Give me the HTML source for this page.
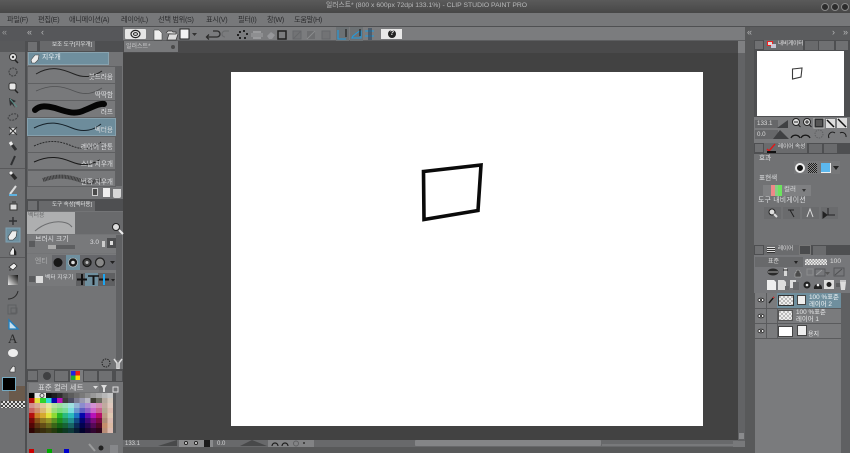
<!DOCTYPE html>
<html lang="ko"><head><meta charset="utf-8"><style>
html,body{margin:0;padding:0;background:#58595a}
#p{position:relative;width:850px;height:453px;overflow:hidden;background:#58595a;font-family:"Liberation Sans","Noto Sans CJK KR",sans-serif;font-size:6.500px;color:#cfd0d1;line-height:1;filter:blur(.28px)}
#p div,#p svg{position:absolute}
.t{white-space:nowrap}
.m{top:16px;color:#2c2d2f;font-size:7.200px;letter-spacing:-.3px}
.r{background:#78797b;border:1px solid #5f6062;box-sizing:border-box}
.l{color:#dcdddf}
.rr{right:737px;color:#dcdddf;font-size:6.600px}
.pr{display:block;height:5px;position:absolute;left:0;width:84px}
</style></head><body><div id="p">

<!-- title bar -->
<div style="left:0;top:0;width:850px;height:13px;background:linear-gradient(#5a5a5a,#474747)"></div>
<div class="t" style="left:326px;top:3px;font-size:6.800px;color:#b8b9ba">일러스트* (800 x 600px 72dpi 133.1%)  - CLIP STUDIO PAINT PRO</div>
<div style="left:821px;top:3px;width:8px;height:8px;border-radius:4px;background:#2c2c2c;border:1px solid #888;box-sizing:border-box"></div>
<div style="left:831px;top:3px;width:8px;height:8px;border-radius:4px;background:#2c2c2c;border:1px solid #888;box-sizing:border-box"></div>
<div style="left:841px;top:3px;width:8px;height:8px;border-radius:4px;background:#2c2c2c;border:1px solid #888;box-sizing:border-box"></div>

<!-- menu -->
<div style="left:0;top:13px;width:850px;height:13px;background:#77787a;border-bottom:1px solid #4f5052"></div>
<div class="t m" style="left:7px">파일(F)</div>
<div class="t m" style="left:38px">편집(E)</div>
<div class="t m" style="left:69px">애니메이션(A)</div>
<div class="t m" style="left:121px">레이어(L)</div>
<div class="t m" style="left:158px">선택 범위(S)</div>
<div class="t m" style="left:206px">표시(V)</div>
<div class="t m" style="left:238px">필터(I)</div>
<div class="t m" style="left:267px">창(W)</div>
<div class="t m" style="left:294px">도움말(H)</div>

<!-- left top strip -->
<div style="left:0;top:27px;width:123px;height:14px;background:#56575a"></div>
<div class="t" style="left:2px;top:28px;color:#9a9b9c;font-size:9px">«</div>
<div class="t" style="left:27px;top:28px;color:#b5b6b7;font-size:9px">«</div>
<div class="t" style="left:41px;top:28px;color:#b5b6b7;font-size:9px">‹</div>

<!-- toolbar -->
<div style="left:123px;top:27px;width:622px;height:14px;background:#7b7c7e;border-bottom:1px solid #5d5e60;box-sizing:border-box"></div>
<div style="left:125px;top:29px;width:21px;height:10px;background:#e6e6e6;border-radius:1px"></div>
<svg style="left:130px;top:29px" width="11" height="10" viewBox="0 0 11 10"><ellipse cx="5.500" cy="5" rx="4.500" ry="3.600" fill="none" stroke="#222" stroke-width="1.200"/><ellipse cx="5.500" cy="5" rx="2" ry="1.400" fill="none" stroke="#222"/></svg>
<svg style="left:152px;top:28px" width="60" height="13" viewBox="0 0 60 13">
<path d="M2 2h5l3 3v7H2z" fill="#eee" stroke="#333" stroke-width=".5"/>
<path d="M14 5l2-2h4l1 1h3v2h-7l-2 6h9l2-6" fill="#ddd" stroke="#333" stroke-width=".7"/>
<rect x="28" y="1" width="9" height="10" fill="#f2f2f2" stroke="#222"/>
<path d="M40 5h5l-2.500 3z" fill="#333"/></svg>
<svg style="left:204px;top:29px" width="30" height="11" viewBox="0 0 30 11"><path d="M9 2h4a3 3 0 010 6H3M5 5.500L2.500 8 5 10.500" fill="none" stroke="#2c2c2c" stroke-width="1.300"/><path d="M25 2h-4a3 3 0 000 6" fill="none" stroke="#6a6b6d" stroke-width="1.200"/></svg>
<svg style="left:235px;top:28px" width="56" height="13" viewBox="0 0 56 13">
<g fill="#222"><rect x="2" y="6" width="2" height="2"/><rect x="4" y="3" width="2" height="2"/><rect x="8" y="2" width="2" height="2"/><rect x="11" y="5" width="2" height="2"/><rect x="9" y="9" width="2" height="2"/><rect x="4" y="9" width="2" height="2"/></g>
<rect x="18" y="3" width="8" height="8" fill="#9a9b9d"/><rect x="16" y="5" width="12" height="4" fill="#8e8f91"/>
<path d="M32 8l4-4 4 3-3 4h-3z" fill="#96979a"/>
<path d="M43 3h8v8h-8z" fill="none" stroke="#1f1f1f" stroke-width="1.500"/></svg>
<svg style="left:292px;top:28px" width="40" height="13" viewBox="0 0 40 13">
<rect x="1" y="3" width="8" height="8" fill="#727375" stroke="#66676a"/><path d="M1 11l8-8" stroke="#66676a"/>
<rect x="15" y="3" width="8" height="8" fill="#6d6e70"/><path d="M15 11l8-8" stroke="#8b8c8e"/>
<rect x="30" y="3" width="8" height="8" fill="#727375" stroke="#66676a"/></svg>
<svg style="left:336px;top:27px" width="40" height="14" viewBox="0 0 40 14">
<rect x="0" width="13" height="14" fill="#6c7174"/>
<rect x="14" width="13" height="14" fill="#6c7174"/>
<path d="M2 3v9h8" fill="none" stroke="#1f9be0" stroke-width="1.100"/><path d="M10 2v8" stroke="#222" stroke-width="1.200"/>
<path d="M16 11h9V4c-3 0-5 3-8 5z" fill="none" stroke="#1f9be0" stroke-width="1.100"/><path d="M24 2v7" stroke="#222" stroke-width="1.200"/>
<path d="M29 4h9M29 9h9" stroke="#1f9be0" stroke-width="1"/><path d="M33 1v12M35 1v12" stroke="#1f3c58" stroke-width="1"/></svg>
<div style="left:381px;top:29px;width:21px;height:10px;background:#e8e8e8"></div>
<div style="left:388px;top:30px;width:8px;height:8px;border-radius:4px;background:#222;color:#eee;font-size:7px;line-height:8px;text-align:center;font-weight:bold">?</div>

<!-- tab bar -->
<div style="left:123px;top:41px;width:622px;height:12px;background:#4a4a4b"></div>
<div style="left:124px;top:41px;width:54px;height:11px;background:#78797b"></div>
<div class="t" style="left:126px;top:44px;font-size:6px;color:#c9cacb">일러스트*</div>
<div style="left:171px;top:45px;width:4px;height:4px;border-radius:2px;background:#4a4a4a"></div>

<!-- canvas -->
<div style="left:123px;top:53px;width:615px;height:387px;background:#424242"></div>
<div style="left:231px;top:72px;width:472px;height:354px;background:#fff"></div>
<svg style="left:415px;top:158px" width="75" height="68" viewBox="0 0 75 68"><path d="M8.500 13.500 L66 7 L63 52.500 L9 61.500 Z" fill="none" stroke="#0a0a0a" stroke-width="3.600" stroke-linejoin="miter"/></svg>
<div style="left:738px;top:41px;width:7px;height:12px;background:#7f8082"></div>
<div style="left:738px;top:53px;width:7px;height:394px;background:#626365"></div>
<div style="left:739px;top:433px;width:5px;height:6px;background:#8a8b8d"></div>

<!-- bottom status -->
<div style="left:123px;top:447px;width:622px;height:6px;background:#58595a"></div>
<div style="left:123px;top:440px;width:615px;height:7px;background:#68696b"></div>
<div class="t" style="left:125px;top:440.500px;font-size:6px;color:#d5d6d7">133.1</div>
<svg style="left:158px;top:440px" width="20" height="7"><path d="M0 6L19 0V6Z" fill="#48494a"/></svg>
<div style="left:179px;top:440px;width:34px;height:7px;background:#8a8b8d"></div>
<div style="left:184px;top:441px;width:4px;height:4px;border-radius:2px;background:#eee;border:1px solid #222;box-sizing:border-box"></div>
<div style="left:194px;top:441px;width:4px;height:4px;border-radius:2px;background:#eee;border:1px solid #222;box-sizing:border-box"></div>
<div style="left:204px;top:440px;width:6px;height:7px;background:#1b1b1b"></div>
<div class="t" style="left:217px;top:441px;font-size:6px;color:#d5d6d7">0.0</div>
<svg style="left:240px;top:440px" width="28" height="7"><path d="M0 6L12 0L27 6Z" fill="#48494a"/></svg>
<div style="left:268px;top:440px;width:46px;height:7px;background:#828385"></div>
<svg style="left:270px;top:440px" width="40" height="7"><path d="M2 6a3 3 0 016 0M12 6a3 3 0 016 0" stroke="#1d1d1d" fill="none" stroke-width="1.200"/><circle cx="26" cy="3.500" r="2.500" fill="none" stroke="#606163"/><rect x="33" y="2" width="2" height="2" fill="#444"/></svg>
<div style="left:415px;top:440px;width:186px;height:6px;background:#848587;border-radius:1px"></div>
<div style="left:602px;top:444px;width:132px;height:2px;background:#78797b"></div>
<div style="left:733px;top:441px;width:12px;height:6px;background:#78797b"></div>

<!-- left toolbox -->
<div style="left:0;top:41px;width:25px;height:412px;background:#6f7072"></div>
<div style="left:0;top:41px;width:25px;height:11px;background:#58595b"></div>
<div style="left:25px;top:41px;width:2px;height:412px;background:#4e4f51"></div>
<div style="left:0;top:168px;width:25px;height:1px;background:#59595b"></div>
<div style="left:0;top:257px;width:25px;height:1px;background:#59595b"></div>
<div style="left:0;top:376px;width:25px;height:1px;background:#59595b"></div>
<svg style="left:0;top:48px" width="25" height="330" viewBox="0 0 25 330">
<circle cx="13" cy="9" r="3.500" fill="#e5e5e5" stroke="#333"/><circle cx="13" cy="9" r="1.200" fill="#333"/><path d="M15 12l3 3" stroke="#222" stroke-width="1.500"/>
<circle cx="13" cy="24" r="4" fill="none" stroke="#3a3b3c" stroke-dasharray="2 1"/>
<rect x="9" y="35" width="7" height="7" rx="2" fill="#e8e8e8" stroke="#333"/><path d="M15 42l3 3" stroke="#222" stroke-width="1.500"/>
<path d="M9 50l7 3-3 2 2 5-3-4-2 2z" fill="#2f3032"/><path d="M10 51l7 8" stroke="#5a8e88"/>
<ellipse cx="13" cy="69" rx="5" ry="3" fill="none" stroke="#3f4042" stroke-dasharray="2 1" transform="rotate(-18 13 69)"/>
<circle cx="13" cy="83" r="3" fill="#e3e3e3"/><path d="M9 79l8 8M9 87l8-8" stroke="#333"/>
<path d="M10 94l6 8" stroke="#2f3032" stroke-width="3"/><path d="M10 94l2 3" stroke="#eee" stroke-width="3"/>
<path d="M15 108l-4 9" stroke="#2f3032" stroke-width="2"/>
<path d="M10 124l6 7" stroke="#2b2b2b" stroke-width="3.500"/><path d="M10 124l2 2" stroke="#eee" stroke-width="3"/>
<path d="M16 138l-6 8" stroke="#ddd" stroke-width="2"/><path d="M9 147h8" stroke="#5fb2e0" stroke-width="2"/>
<rect x="10" y="156" width="7" height="6" fill="#ddd" stroke="#333"/><path d="M12 154h4" stroke="#333"/>
<path d="M13 169v8M9 173h8" stroke="#2f3032" stroke-width="1.400"/>
<rect x="6" y="180" width="14" height="14" fill="#6d8f9f" stroke="#7fa1b1"/><path d="M8 189l4-6h5l-1 6-3 3H9z" fill="#eee" stroke="#333" stroke-width=".6"/>
<path d="M10 204l3-5 3 5v3h-6z" fill="#ececec" stroke="#222" stroke-width=".6"/><path d="M14 200l2 4v3h-2z" fill="#222"/>
<path d="M9 219l5-4 3 3-4 4zM9 222h2" fill="#eee" stroke="#222" stroke-width=".7"/>
<rect x="8" y="227" width="10" height="10" fill="url(#g)"/><defs><linearGradient id="g" x1="0" y1="1" x2="1" y2="0"><stop offset="0" stop-color="#eee"/><stop offset="1" stop-color="#111"/></linearGradient></defs>
<path d="M8 251c5 0 9-3 10-8" fill="none" stroke="#2c2c2c"/>
<rect x="8" y="257" width="8" height="9" fill="none" stroke="#5e5f61"/><rect x="11" y="260" width="6" height="5" fill="none" stroke="#5e5f61"/>
<path d="M9 272v9h9z" fill="#c8e0ee" stroke="#1f7fc0" stroke-width="1.300"/>
<ellipse cx="13" cy="305" rx="5" ry="4" fill="#eee"/>
<path d="M10 322l3-4 2 1v5h-5z" fill="#e8e8e8" stroke="#333" stroke-width=".6"/>
</svg>
<div class="t" style="left:8px;top:332px;font-family:'Liberation Serif',serif;font-size:13px;color:#2b2b2b">A</div>
<div style="left:0;top:376px;width:25px;height:77px;background:#6f7072"></div>
<div style="left:9px;top:386px;width:16px;height:15px;background:#6a5a4c"></div>
<div style="left:2px;top:377px;width:14px;height:14px;background:#000;border:1px solid #74a9c1;box-sizing:border-box"></div>
<div style="left:1px;top:401px;width:24px;height:7px;background:repeating-conic-gradient(#ddd 0 25%,#444 0 50%) 0 0/4px 4px"></div>

<!-- left panel: sub tool -->
<div style="left:27px;top:41px;width:96px;height:412px;background:#737476"></div>
<div style="left:27px;top:41px;width:96px;height:11px;background:#4e4f51"></div>
<div style="left:28px;top:42px;width:9px;height:9px;background:#6f7072"></div>
<div style="left:40px;top:41px;width:55px;height:10px;background:#68696b"></div>
<div class="t" style="left:52px;top:43px;font-size:5.500px;color:#dfe0e1">보조 도구[지우개]</div>
<div style="left:28px;top:52px;width:81px;height:13px;background:#6f8f9e;border:1px solid #88a3af;box-sizing:border-box"></div>
<svg style="left:29px;top:53px" width="12" height="11"><path d="M2 7l4-5h4l-1 5-3 3H3z" fill="#eee" stroke="#444" stroke-width=".6"/></svg>
<div class="t" style="left:42px;top:55px;font-size:6.800px;color:#e4ebef">지우개</div>
<div style="left:116px;top:66px;width:6px;height:120px;background:#5e5f61"></div>

<div class="r" style="left:27px;top:66px;width:89px;height:18px"></div>
<div class="r" style="left:27px;top:83px;width:89px;height:18px"></div>
<div class="r" style="left:27px;top:100px;width:89px;height:18px"></div>
<div style="left:27px;top:118px;width:89px;height:18px;background:#6d8c9b;border:1px solid #85a0ad;box-sizing:border-box"></div>
<div class="r" style="left:27px;top:136px;width:89px;height:17px"></div>
<div class="r" style="left:27px;top:152px;width:89px;height:18px"></div>
<div class="r" style="left:27px;top:170px;width:89px;height:17px"></div>
<svg style="left:27px;top:66px" width="89" height="122" viewBox="0 0 89 122">
<path d="M9 8c15-9 26-5 38 0s20 2 28-3" fill="none" stroke="#222" stroke-width="1"/>
<path d="M9 25c15-7 26-5 38 0s20 2 28-3" fill="none" stroke="#505153" stroke-width=".8"/>
<path d="M8 44c5-5 12-4 20-2 12 4 20 7 30 2 8-3 14-7 19-6" fill="none" stroke="#050505" stroke-width="6" stroke-linecap="round"/>
<path d="M7 62c15-8 26-5 38 0s22 2 29-4" fill="none" stroke="#152028" stroke-width="1"/>
<path d="M7 80c15-7 26-5 38 0s22 2 29-4" fill="none" stroke="#2a2b2c" stroke-width="1" stroke-dasharray="2 1"/>
<path d="M7 96c15-7 26-5 38 0s20 2 28-2" fill="none" stroke="#1a1a1a" stroke-width="1"/>
<path d="M16 114c14-5 24-4 36 0s15 1 22 0" fill="none" stroke="#2a2a2a" stroke-width="4" stroke-dasharray="1 .5" opacity=".75"/>
</svg>
<div class="t rr" style="top:75px">붓드러움</div>
<div class="t rr" style="top:93px">딱딱함</div>
<div class="t rr" style="top:110px">러프</div>
<div class="t rr" style="top:128px">벡터용</div>
<div class="t rr" style="top:145px">레이어 관통</div>
<div class="t rr" style="top:162px">스냅 지우개</div>
<div class="t rr" style="top:180px">번죽 지우개</div>
<div style="left:92px;top:188px;width:6px;height:8px;background:#4a4a4a;border:1px solid #ccc;box-sizing:border-box"></div>
<div style="left:103px;top:188px;width:7px;height:9px;background:#eee"></div>
<div style="left:113px;top:189px;width:8px;height:9px;background:#d8d8d8;border-radius:0 0 2px 2px"></div>

<!-- tool property -->
<div style="left:27px;top:199px;width:96px;height:12px;background:#4e4f51"></div>
<div style="left:28px;top:201px;width:9px;height:9px;background:#6f7072"></div>
<div style="left:39px;top:201px;width:56px;height:10px;background:#68696b"></div>
<div class="t" style="left:52px;top:203px;font-size:5.500px;color:#dfe0e1">도구 속성[벡터용]</div>
<div style="left:27px;top:212px;width:96px;height:22px;background:#696a6c"></div>
<div style="left:27px;top:212px;width:48px;height:22px;background:#aeafb0"></div>
<svg style="left:27px;top:212px" width="50" height="22"><path d="M8 19c9-8 20-10 27-9s8 3 10 5" fill="none" stroke="#6d6e70"/></svg>
<div class="t" style="left:28px;top:213px;font-size:6px;color:#6c6d6e">벡터용</div>
<svg style="left:111px;top:222px" width="13" height="13"><circle cx="5" cy="5" r="3.500" fill="#ddd" stroke="#222"/><path d="M8 8l4 4" stroke="#eee" stroke-width="2"/></svg>
<div style="left:27px;top:235px;width:89px;height:18px;background:#78797b"></div>
<div style="left:116px;top:235px;width:6px;height:125px;background:#606163"></div>
<div style="left:29px;top:241px;width:6px;height:6px;background:#5a5b5d"></div>
<div class="t l" style="left:35px;top:237px;font-size:6.900px">브러시 크기</div>
<div style="left:48px;top:245px;width:27px;height:4px;background:#5d5e60"></div>
<div style="left:48px;top:245px;width:8px;height:4px;background:#aaa"></div>
<div class="t l" style="left:90px;top:240px;font-size:6.500px">3.0</div>
<div style="left:102px;top:241px;width:3px;height:6px;background:#ccc"></div>
<div style="left:107px;top:238px;width:9px;height:10px;background:#4d4e50"></div>
<div style="left:110px;top:241px;width:3px;height:4px;background:#ddd"></div>
<div style="left:27px;top:254px;width:89px;height:19px;background:#78797b"></div>
<div class="t" style="left:35px;top:259px;font-size:6.800px;color:#aeafb0">엔티</div>
<div style="left:52px;top:255px;width:64px;height:15px;background:#65666a"></div>
<div style="left:66px;top:255px;width:14px;height:15px;background:#6f8f9e"></div>
<svg style="left:52px;top:255px" width="64" height="15"><circle cx="6" cy="7.500" r="4.500" fill="#171717"/>
<circle cx="21" cy="7.500" r="4.500" fill="#1a1a1a" stroke="#ccc" stroke-width=".6"/><circle cx="21" cy="7.500" r="1.800" fill="#ddd"/>
<circle cx="35" cy="7.500" r="4" fill="#444" stroke="#1a1a1a" stroke-width="1.300"/><circle cx="35" cy="7.500" r="1.500" fill="#bbb"/>
<circle cx="48" cy="7.500" r="4.500" fill="#888" stroke="#222" stroke-width="1.300"/><path d="M58 6h5l-2.500 3z" fill="#222"/></svg>
<div style="left:27px;top:272px;width:89px;height:14px;background:#78797b"></div>
<div style="left:29px;top:276px;width:6px;height:6px;background:#5a5b5d"></div>
<div style="left:36px;top:276px;width:7px;height:7px;background:#ddd"></div>
<div class="t l" style="left:45px;top:276px;font-size:5.800px">벡터 지우기</div>
<div style="left:76px;top:273px;width:39px;height:13px;background:#5f6062"></div>
<div style="left:85px;top:273px;width:13px;height:13px;background:#6f8f9e"></div>
<svg style="left:76px;top:273px" width="39" height="13"><path d="M1 6.500h10M23 6.500h10" stroke="#111" stroke-width="2"/><path d="M6 1v11" stroke="#111" stroke-width="2"/><path d="M12 3h11" stroke="#111" stroke-width="1.500"/><path d="M17.500 3v9" stroke="#111" stroke-width="2"/><path d="M28 1v11" stroke="#1ea5ef" stroke-width="2"/><path d="M35 6h4l-2 2.500z" fill="#222"/></svg>
<svg style="left:100px;top:357px" width="24" height="13"><circle cx="6" cy="6" r="4" fill="none" stroke="#1f1f1f" stroke-dasharray="1.500 1"/><path d="M14 2l3 4v6h2V6l3-4" fill="none" stroke="#ddd" stroke-width="1.500"/></svg>

<!-- color set -->
<div style="left:27px;top:369px;width:96px;height:13px;background:#4e4f51"></div>
<div style="left:28px;top:371px;width:9px;height:9px;background:#6f7072"></div>
<div style="left:38px;top:370px;width:16px;height:12px;background:#6a6b6d"></div>
<div style="left:43px;top:372px;width:8px;height:8px;border-radius:4px;background:#3f4042"></div>
<div style="left:55px;top:371px;width:13px;height:10px;background:#6f7072"></div>
<div style="left:70px;top:370px;width:13px;height:12px;background:#7b7c7e"></div>
<div style="left:71px;top:371px;width:9px;height:9px;background:conic-gradient(#e21 0 25%,#fd0 0 50%,#2a3 0 75%,#22d 0)"></div>
<div style="left:84px;top:371px;width:13px;height:10px;background:#6f7072"></div>
<div style="left:99px;top:371px;width:13px;height:10px;background:#6f7072"></div>
<div style="left:116px;top:371px;width:6px;height:10px;background:#6a6b6d"></div>
<div style="left:27px;top:382px;width:96px;height:71px;background:#737476"></div>
<div style="left:29px;top:383px;width:70px;height:9px;background:#7e7f81;border-radius:1px"></div>
<div class="t" style="left:38px;top:384px;font-size:7.500px;color:#d9d9da">표준 컬러 세트</div>
<svg style="left:92px;top:384px" width="28" height="9"><path d="M1 2h5L3.500 5zM9 1l2 3v4h2V4l2-3" fill="#ddd"/><rect x="21" y="3" width="5" height="5" fill="none" stroke="#ddd"/></svg>
<div style="left:113px;top:393px;width:3px;height:40px;background:#595a5c"></div>
<div id="pal" style="left:29px;top:393px;width:84px;height:40px;background:#222;filter:saturate(.72) brightness(.9)">
<div class="pr" style="top:0;background:linear-gradient(90deg,#000 0 5.600px,#fff 5.600px 16.800px,#111 16.800px 22.400px,#222 22.400px 28px,#333 28px 33.600px,#555 33.600px 39.200px,#666 39.200px 44.800px,#777 44.800px 50.400px,#888 50.400px 56px,#999 56px 61.600px,#aaa 61.600px 67.200px,#bbb 67.200px 72.800px,#ccc 72.800px 78.400px,#ddd 78.400px 84px)"></div>
<div class="pr" style="top:5px;background:linear-gradient(90deg,#f00 0 5.600px,#ff0 5.600px 11.200px,#0f0 11.200px 16.800px,#0ff 16.800px 22.400px,#00f 22.400px 28px,#f0f 28px 33.600px,#444 33.600px 39.200px,#557 39.200px 44.800px,#88a 44.800px 50.400px,#aac 50.400px 56px,#ccd 56px 61.600px,#443 61.600px 67.200px,#776 67.200px 72.800px,#cba 72.800px 78.400px,#edc 78.400px 84px)"></div>
<div class="pr" style="top:10px;background:linear-gradient(90deg,#f99 0 5.600px,#fb9 5.600px 11.200px,#fd9 11.200px 16.800px,#ff9 16.800px 22.400px,#bf9 22.400px 28px,#9f9 28px 33.600px,#9fc 33.600px 39.200px,#9ff 39.200px 44.800px,#9cf 44.800px 50.400px,#99f 50.400px 56px,#c9f 56px 61.600px,#f9f 61.600px 67.200px,#f9c 67.200px 72.800px,#dba 72.800px 78.400px,#fdc 78.400px 84px)"></div>
<div class="pr" style="top:15px;background:linear-gradient(90deg,#f66 0 5.600px,#f96 5.600px 11.200px,#fc6 11.200px 16.800px,#ff6 16.800px 22.400px,#9f6 22.400px 28px,#6f6 28px 33.600px,#6f9 33.600px 39.200px,#6ff 39.200px 44.800px,#6af 44.800px 50.400px,#66f 50.400px 56px,#a6f 56px 61.600px,#f6f 61.600px 67.200px,#f6a 67.200px 72.800px,#cb9 72.800px 78.400px,#fcb 78.400px 84px)"></div>
<div class="pr" style="top:20px;background:linear-gradient(90deg,#f00 0 5.600px,#f80 5.600px 11.200px,#fb0 11.200px 16.800px,#ff0 16.800px 22.400px,#8f0 22.400px 28px,#0d0 28px 33.600px,#0d8 33.600px 39.200px,#0dd 39.200px 44.800px,#08f 44.800px 50.400px,#00f 50.400px 56px,#80f 56px 61.600px,#f0f 61.600px 67.200px,#f08 67.200px 72.800px,#da8 72.800px 78.400px,#fdb 78.400px 84px)"></div>
<div class="pr" style="top:25px;background:linear-gradient(90deg,#a00 0 5.600px,#a50 5.600px 11.200px,#a80 11.200px 16.800px,#aa0 16.800px 22.400px,#5a0 22.400px 28px,#0a0 28px 33.600px,#0a5 33.600px 39.200px,#0aa 39.200px 44.800px,#05a 44.800px 50.400px,#00a 50.400px 56px,#50a 56px 61.600px,#a0a 61.600px 67.200px,#a05 67.200px 72.800px,#c97 72.800px 78.400px,#fcb 78.400px 84px)"></div>
<div class="pr" style="top:30px;background:linear-gradient(90deg,#700 0 5.600px,#730 5.600px 11.200px,#750 11.200px 16.800px,#770 16.800px 22.400px,#370 22.400px 28px,#070 28px 33.600px,#073 33.600px 39.200px,#077 39.200px 44.800px,#037 44.800px 50.400px,#007 50.400px 56px,#307 56px 61.600px,#707 61.600px 67.200px,#703 67.200px 72.800px,#e96 72.800px 78.400px,#fca 78.400px 84px)"></div>
<div class="pr" style="top:35px;background:linear-gradient(90deg,#400 0 5.600px,#420 5.600px 11.200px,#430 11.200px 16.800px,#440 16.800px 22.400px,#240 22.400px 28px,#040 28px 33.600px,#042 33.600px 39.200px,#044 39.200px 44.800px,#024 44.800px 50.400px,#004 50.400px 56px,#204 56px 61.600px,#404 61.600px 67.200px,#402 67.200px 72.800px,#d97 72.800px 78.400px,#fcb 78.400px 84px)"></div>
</div>
<svg style="left:29px;top:393px" width="20" height="6"><circle cx="13" cy="2.500" r="2" fill="none" stroke="#555"/></svg>
<div style="left:29px;top:449px;width:5px;height:4px;background:#c00"></div>
<div style="left:47px;top:449px;width:5px;height:4px;background:#0a0"></div>
<div style="left:64px;top:449px;width:5px;height:4px;background:#00c"></div>
<svg style="left:88px;top:443px" width="34" height="10"><path d="M1 1l6 7" stroke="#9a9b9c" stroke-width="2"/><circle cx="13" cy="5" r="2.500" fill="#222"/><rect x="22" y="2" width="8" height="8" fill="#86878a"/></svg>

<!-- right panels -->
<div style="left:745px;top:27px;width:105px;height:426px;background:#58595a"></div>
<div style="left:750px;top:27px;width:100px;height:13px;background:#5b5c5e"></div>
<div class="t" style="left:747px;top:28px;color:#b5b6b7;font-size:9px">«</div>
<div class="t" style="left:832px;top:28px;color:#b5b6b7;font-size:9px">›</div>
<div class="t" style="left:843px;top:28px;color:#b5b6b7;font-size:9px">»</div>
<div style="left:754px;top:40px;width:96px;height:10px;background:#4e4f51"></div>
<div style="left:755px;top:41px;width:8px;height:8px;background:#6f7072"></div>
<div style="left:764px;top:40px;width:39px;height:10px;background:#6a6b6d"></div>
<div style="left:767px;top:41px;width:6px;height:5px;border:1px solid #f02020;box-sizing:border-box;background:#ddd"></div>
<div style="left:771px;top:44px;width:5px;height:4px;background:#dde;opacity:.8"></div>
<div class="t" style="left:778px;top:42px;font-size:5.500px;color:#e2e2e3">내비게이터</div>
<div style="left:805px;top:41px;width:13px;height:9px;background:#696a6c"></div>
<div style="left:819px;top:41px;width:15px;height:9px;background:#6f7072"></div>
<div style="left:836px;top:41px;width:12px;height:9px;background:#6f7072"></div>
<div style="left:754px;top:50px;width:96px;height:67px;background:#4e4f51"></div>
<div style="left:757px;top:51px;width:87px;height:65px;background:#fff"></div>
<svg style="left:785px;top:62px" width="20" height="20"><path d="M7.500 7 L17 6 L16 15 L7.500 17Z" fill="none" stroke="#3a3a3a" stroke-width="1.100"/></svg>
<div style="left:754px;top:117px;width:96px;height:26px;background:#7a7b7d"></div>
<div style="left:755px;top:120px;width:23px;height:8px;background:#666769"></div>
<div class="t" style="left:757px;top:121px;font-size:6.200px;color:#ddd">133.1</div>
<svg style="left:777px;top:120px" width="12" height="8"><path d="M0 8L11 0V8Z" fill="#3f4042"/></svg>
<div style="left:755px;top:130px;width:23px;height:9px;background:#666769"></div>
<div class="t" style="left:757px;top:131.500px;font-size:6.200px;color:#ddd">0.0</div>
<svg style="left:773px;top:130px" width="16" height="9"><path d="M0 9L7 0L16 9Z" fill="#3f4042"/></svg>
<svg style="left:790px;top:118px" width="58" height="23" viewBox="0 0 58 23">
<circle cx="6" cy="4" r="3.500" fill="#e0e0e0" stroke="#222"/><path d="M4 4h4" stroke="#222"/><path d="M8.500 7l2 2" stroke="#222"/>
<circle cx="17" cy="4" r="3.500" fill="#e0e0e0" stroke="#222"/><path d="M15 4h4M17 2v4" stroke="#222"/><path d="M19.500 7l2 2" stroke="#222"/>
<rect x="24" y="0" width="10" height="10" fill="#2f3032" stroke="#bbb"/><rect x="26" y="2" width="6" height="6" fill="#555"/>
<rect x="36" y="1" width="9" height="9" fill="#ddd"/><path d="M37 2l7 7" stroke="#111" stroke-width="1.500"/>
<rect x="47" y="0" width="10" height="10" fill="#ddd"/><path d="M48 1l8 8" stroke="#111" stroke-width="1.500"/>
<path d="M1 20a5 5 0 019 0M11 20a5 5 0 019 0" fill="none" stroke="#1a1a1a" stroke-width="1.300"/>
<circle cx="29" cy="16" r="4" fill="none" stroke="#5f6062" stroke-dasharray="1.500 1"/>
<path d="M39 20a4 4 0 016-5M50 15a4 4 0 016 4" fill="none" stroke="#1a1a1a"/>
</svg>

<!-- layer property -->
<div style="left:754px;top:143px;width:96px;height:11px;background:#4e4f51"></div>
<div style="left:755px;top:144px;width:8px;height:8px;background:#6f7072"></div>
<div style="left:764px;top:143px;width:43px;height:10px;background:#6a6b6d"></div>
<svg style="left:766px;top:143px" width="11" height="10"><path d="M1 6l2 2 6-7" fill="none" stroke="#e01818" stroke-width="1.400"/><path d="M1 8h9v2H1z" fill="#111"/></svg>
<div class="t" style="left:778px;top:145px;font-size:5.600px;color:#e2e2e3">레이어 속성</div>
<div style="left:809px;top:144px;width:13px;height:9px;background:#6a6b6d"></div>
<div style="left:824px;top:144px;width:13px;height:9px;background:#6a6b6d"></div>
<div style="left:754px;top:154px;width:96px;height:91px;background:#717274"></div>
<div class="t l" style="left:759px;top:156px;font-size:6.600px">효과</div>
<div style="left:794px;top:161px;width:46px;height:13px;background:#77787a"></div>
<div style="left:795px;top:163px;width:10px;height:10px;border-radius:5px;background:#111;border:2px solid #eee;box-sizing:border-box"></div>
<div style="left:808px;top:163px;width:9px;height:10px;background:repeating-conic-gradient(#1d1d1d 0 25%,#888 0 50%) 0 0/2px 2px"></div>
<div style="left:821px;top:163px;width:9px;height:9px;background:#5cb8ee;border-right:1px solid #eee;border-bottom:1px solid #eee"></div>
<div style="left:833px;top:166px;border:3px solid transparent;border-top:4px solid #222"></div>
<div class="t l" style="left:759px;top:176px;font-size:6.600px">표현색</div>
<div style="left:763px;top:185px;width:48px;height:11px;background:#7f8082"></div>
<div style="left:771px;top:185px;width:4px;height:11px;background:#e88"></div>
<div style="left:775px;top:185px;width:3px;height:11px;background:#8c8"></div>
<div style="left:778px;top:185px;width:4px;height:11px;background:#6ce45e"></div>
<div class="t l" style="left:784px;top:187px;font-size:6.500px">컬러</div>
<div style="left:802px;top:189px;border:2.500px solid transparent;border-top:3px solid #333"></div>
<div class="t l" style="left:758px;top:198px;font-size:6.900px;letter-spacing:.2px">도구 내비게이션</div>
<div style="left:764px;top:207px;width:17px;height:12px;background:#6a6b6d"></div>
<div style="left:783px;top:207px;width:17px;height:12px;background:#6a6b6d"></div>
<div style="left:802px;top:207px;width:17px;height:12px;background:#6a6b6d"></div>
<div style="left:821px;top:207px;width:17px;height:12px;background:#6a6b6d"></div>
<svg style="left:764px;top:207px" width="74" height="12"><circle cx="8" cy="5" r="3" fill="#ddd" stroke="#222"/><path d="M10 7l3 3" stroke="#ddd" stroke-width="2"/><path d="M24 3h6M26 3l4 7" stroke="#222" fill="none"/><path d="M43 10l3-8 3 8" stroke="#ddd" fill="none"/><path d="M59 5v6l4-3zM64 1v7M59 8h12" stroke="#222" fill="#222"/></svg>

<!-- layer panel -->
<div style="left:754px;top:245px;width:96px;height:10px;background:#4e4f51"></div>
<div style="left:755px;top:246px;width:8px;height:8px;background:#6f7072"></div>
<div style="left:764px;top:245px;width:35px;height:10px;background:#6a6b6d"></div>
<div style="left:767px;top:247px;width:8px;height:6px;background:repeating-linear-gradient(#ddd 0 1px,#333 1px 2px)"></div>
<div class="t" style="left:778px;top:247px;font-size:5.500px;color:#e2e2e3">레이어</div>
<div style="left:799px;top:245px;width:12px;height:10px;background:#4a4b4d;border:1px solid #777;box-sizing:border-box"></div>
<div style="left:813px;top:246px;width:13px;height:9px;background:#6a6b6d"></div>
<div style="left:754px;top:255px;width:96px;height:38px;background:#76777a"></div>
<div style="left:755px;top:257px;width:48px;height:10px;background:#68696b"></div>
<div class="t" style="left:768px;top:259px;font-size:6px;color:#ddd">표준</div>
<div style="left:794px;top:261px;border:2.500px solid transparent;border-top:3px solid #222"></div>
<div style="left:805px;top:259px;width:22px;height:6px;background:repeating-conic-gradient(#eee 0 25%,#999 0 50%) 0 0/3px 3px"></div>
<div class="t" style="left:830px;top:258.500px;font-size:6.600px;color:#ddd">100</div>
<svg style="left:766px;top:267px" width="80" height="24" viewBox="0 0 80 24">
<ellipse cx="7" cy="5" rx="5.500" ry="3.500" fill="#2a2a2a"/><path d="M2 5h10" stroke="#aaa"/>
<path d="M18 1h3v8h-3z" fill="#d8d8d8"/><path d="M17 3h5" stroke="#222"/>
<path d="M30 5a2 2 0 014 0v1h1v4h-6V6h1z" fill="#4a4a4a" stroke="#ccc" stroke-width=".4"/>
<rect x="41" y="2" width="6" height="6" fill="none" stroke="#8c8d8f"/>
<rect x="49" y="2" width="10" height="7" fill="none" stroke="#56575a"/><path d="M50 8l6-5" stroke="#9b9c9e"/><path d="M59 5h5l-2.500 3z" fill="#555"/>
<rect x="68" y="1" width="10" height="8" fill="none" stroke="#56575a"/><path d="M69 8l7-6" stroke="#4f5052"/>
<path d="M1 13h7l2 2v8H1z" fill="#eee"/>
<path d="M12 13h6l2 2v8h-8z" fill="#ddd"/><rect x="19" y="19" width="4" height="4" fill="#6a6b6d"/>
<rect x="24" y="13" width="6" height="8" fill="#ddd"/><rect x="27" y="15" width="6" height="8" fill="#66676a"/>
<circle cx="41" cy="18" r="3.500" fill="#222"/><circle cx="41" cy="18" r="1.300" fill="#eee"/>
<path d="M48 22a4 4 0 018-2v2z" fill="#222"/><circle cx="52" cy="18" r="1.300" fill="#eee"/>
<rect x="58" y="13" width="10" height="9" fill="#ddd"/><circle cx="63" cy="17.500" r="2.500" fill="#222"/>
<rect x="70" y="16" width="4" height="4" fill="#5d5e60"/>
<path d="M74 15h6l-1 8h-4z" fill="#ddd"/><path d="M74 14h6" stroke="#ddd" stroke-width="1.500"/>
</svg>

<!-- layer list -->
<div style="left:755px;top:293px;width:86px;height:160px;background:#7a7b7d"></div>
<div style="left:841px;top:293px;width:9px;height:160px;background:#5f6062"></div>
<div style="left:755px;top:308px;width:86px;height:1px;background:#5a5b5d"></div>
<div style="left:755px;top:323px;width:86px;height:1px;background:#5a5b5d"></div>
<div style="left:755px;top:338px;width:86px;height:1px;background:#5a5b5d"></div>
<div style="left:766px;top:293px;width:1px;height:45px;background:#5a5b5d"></div>
<div style="left:777px;top:293px;width:1px;height:45px;background:#5a5b5d"></div>
<div style="left:777px;top:293px;width:64px;height:15px;background:#6f8f9e"></div>
<svg style="left:754px;top:293px" width="24" height="46"><g fill="#eee" stroke="#1b1b1b" stroke-width=".8"><ellipse cx="7" cy="7" rx="3" ry="1.800"/><ellipse cx="7" cy="23" rx="3" ry="1.800"/><ellipse cx="7" cy="38" rx="3" ry="1.800"/></g><circle cx="7" cy="7" r="1" fill="#111"/><circle cx="7" cy="23" r="1" fill="#111"/><circle cx="7" cy="38" r="1" fill="#111"/><path d="M15 10l5-6" stroke="#1a1a1a" stroke-width="1.400"/><path d="M19 5l1-1" stroke="#d33" stroke-width="1.500"/></svg>
<div style="left:778px;top:295px;width:16px;height:11px;background:repeating-conic-gradient(#eee 0 25%,#bbb 0 50%) 0 0/4px 4px;border:1px solid #333;box-sizing:border-box"></div>
<div style="left:797px;top:295px;width:9px;height:10px;background:#eee;border:1px solid #444;box-sizing:border-box"></div>
<div class="t" style="left:809px;top:295px;font-size:6.400px;color:#eef2f4">100 %표준</div>
<div class="t" style="left:809px;top:302px;font-size:6.400px;color:#eef2f4">레이어 2</div>
<div style="left:778px;top:310px;width:15px;height:11px;background:repeating-conic-gradient(#eee 0 25%,#bbb 0 50%) 0 0/4px 4px;border:1px solid #555;box-sizing:border-box"></div>
<div class="t" style="left:796px;top:310px;font-size:6.400px;color:#e4e5e6">100 %표준</div>
<div class="t" style="left:796px;top:317px;font-size:6.400px;color:#e4e5e6">레이어 1</div>
<div style="left:778px;top:326px;width:15px;height:11px;background:#fff;border:1px solid #444;box-sizing:border-box"></div>
<div style="left:797px;top:325px;width:10px;height:11px;background:#eee;border:1px solid #444;box-sizing:border-box"></div>
<div class="t" style="left:808px;top:332px;font-size:6px;color:#e4e5e6">용지</div>
</div></body></html>
